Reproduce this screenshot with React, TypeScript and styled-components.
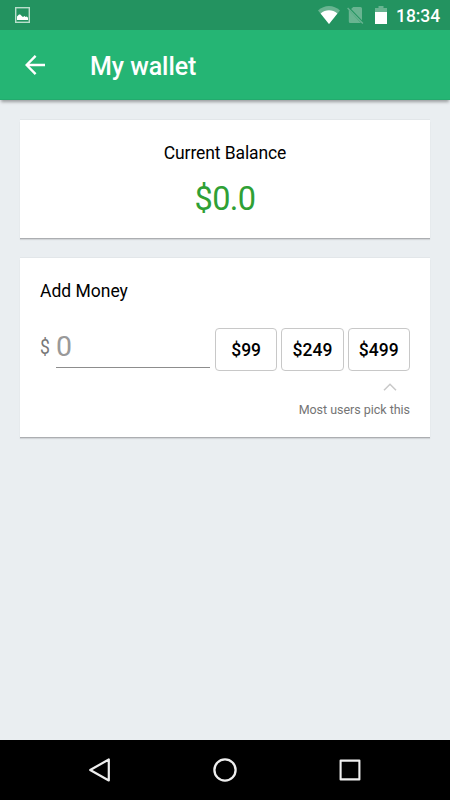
import React from "react";
import styled, { createGlobalStyle } from "styled-components";

const GlobalStyle = createGlobalStyle`
  * { box-sizing: border-box; }
  html, body { margin: 0; padding: 0; }
  body { font-family: Roboto, "Liberation Sans", sans-serif; background: #eaeef1; }
`;

const Screen = styled.div`
  width: 450px;
  height: 800px;
  display: flex;
  flex-direction: column;
  overflow: hidden;
  background: #eaeef1;
`;

const StatusBar = styled.header`
  height: 30px;
  flex: none;
  display: flex;
  align-items: center;
  padding: 0 10px 0 15px;
  background: #239360;
`;

const StatusIcons = styled.div`
  display: flex;
  align-items: center;
  margin-left: auto;
`;

const Clock = styled.time`
  width: 44px;
  margin-left: 9px;
  font-size: 17.5px;
  line-height: 30px;
  letter-spacing: -0.05px;
  padding-top: 2px;
  font-weight: 500;
  color: #fff;
  white-space: nowrap;
`;

const AppBar = styled.nav`
  height: 70px;
  flex: none;
  display: flex;
  align-items: center;
  padding-left: 25px;
  background: #25b574;
  border-bottom: 1px solid #22ab6d;
  box-shadow: 0 3px 3px -1px rgba(0, 0, 0, 0.34);
`;

const IconButton = styled.button`
  display: flex;
  padding: 0;
  border: 0;
  background: none;
`;

const Title = styled.h1`
  margin: 4px 0 0 45px;
  font-size: 25px;
  line-height: 30px;
  letter-spacing: -0.05px;
  font-weight: 500;
  color: #fff;
`;

const Content = styled.main`
  flex: 1;
  display: flex;
  flex-direction: column;
  gap: 20px;
  padding: 20px;
`;

const Card = styled.section<{ $height: number; $centered?: boolean }>`
  height: ${(p) => p.$height}px;
  display: flex;
  flex-direction: column;
  align-items: ${(p) => (p.$centered ? "center" : "stretch")};
  padding: 20px;
  background: #fff;
  box-shadow: 0 -1px 0 rgba(0, 0, 0, 0.03), 0 1px 0 rgba(0, 0, 0, 0.18), 0 2px 1px rgba(0, 0, 0, 0.1);
`;

const Label = styled.h2<{ $tight?: boolean }>`
  margin: 0;
  font-size: 17.5px;
  line-height: 26px;
  font-weight: 400;
  letter-spacing: ${(p) => (p.$tight ? "-0.1px" : "0")};
  color: #000;
`;

const Balance = styled.div`
  margin-top: 14px;
  font-size: 32.5px;
  line-height: 38px;
  letter-spacing: -0.6px;
  color: #2fa035;
`;

const AmountRow = styled.div`
  display: flex;
  margin-top: 23px;
  height: 44px;
`;

const Currency = styled.span`
  width: 16px;
  font-size: 20px;
  line-height: 40px;
  color: #777;
`;

const CurrencySign = styled.span`
  display: inline-block;
  transform: scaleX(0.88);
  transform-origin: left center;
`;

const AmountField = styled.div`
  width: 154px;
  height: 41px;
  border-bottom: 1px solid #8d8d8d;
  font-size: 28.5px;
  line-height: 40px;
  color: #999;
`;

const Presets = styled.div`
  display: flex;
  gap: 4px;
  margin: 1px 0 0 5px;
`;

const Preset = styled.button`
  width: 62.3px;
  height: 43px;
  padding: 1px 0 0;
  border: 1px solid #c8c8c8;
  border-radius: 4px;
  background: #fff;
  color: #000;
  font: 500 17.5px Roboto, "Liberation Sans", sans-serif;
`;

const Hint = styled.div`
  display: flex;
  flex-direction: column;
  align-items: flex-end;
  margin-top: 12px;
  font-size: 12.5px;
  line-height: 18px;
  letter-spacing: -0.03px;
  color: #747474;
`;

const Caret = styled.svg`
  margin: 0 13px 10px 0;
`;

const NavigationBar = styled.footer`
  height: 60px;
  flex: none;
  display: flex;
  align-items: center;
  justify-content: center;
  gap: 101px;
  background: #000;
`;

function PictureIcon() {
  return (
    <svg width="15" height="16" viewBox="0 0 15 16">
      <rect x=".7" y=".7" width="13.6" height="14.6" fill="none" stroke="#b9dfcc" strokeWidth="1.4" />
      <path d="M2 13V9.5L4 7.5h1.2L7 9.3l1 .7 1.6-1 1 1 1.2-.4L13 10.8V13Z" fill="#fff" />
    </svg>
  );
}

function WifiIcon() {
  return (
    <svg width="22" height="18" viewBox="0 0 22 18">
      <path d="M0 4.5C6.4-1.5 15.6-1.5 22 4.5L11 18Z" fill="#69b491" />
      <path d="M2.6 7.5c5-4.2 11.8-4.2 16.8 0L11 18Z" fill="#fff" />
    </svg>
  );
}

function NoSimIcon() {
  return (
    <svg width="17" height="18" viewBox="0 0 17 18">
      <path d="M6.2 1H13.5Q15 1 15 2.5V14.3L4.1 3.1ZM1.8 4 14 17H3.3Q1.8 17 1.8 15.5Z" fill="#69b491" />
      <path d="m.6 2.1 15.3 15.3" stroke="#69b491" strokeWidth="1.4" />
    </svg>
  );
}

function BatteryIcon() {
  return (
    <svg width="12" height="18" viewBox="0 0 12 18">
      <path d="M0 2h3.5V0h5v2H12v5H0Z" fill="#69b491" />
      <path d="M0 6h12v12H0Z" fill="#fff" />
    </svg>
  );
}

const StatusGap = styled.span<{ $size: number }>`
  width: ${(p) => p.$size}px;
`;

export default function App() {
  return (
    <>
      <GlobalStyle />
      <Screen>
        <StatusBar>
          <PictureIcon />
          <StatusIcons>
            <WifiIcon />
            <StatusGap $size={7} />
            <NoSimIcon />
            <StatusGap $size={11} />
            <BatteryIcon />
            <Clock>18:34</Clock>
          </StatusIcons>
        </StatusBar>
        <AppBar>
          <IconButton aria-label="Back">
            <svg width="20" height="20" viewBox="0 0 20 20" fill="none" stroke="#fff" strokeWidth="2.4">
              <path d="M20 10H2M10.6.9 1.6 10l9 9.1" />
            </svg>
          </IconButton>
          <Title>My wallet</Title>
        </AppBar>
        <Content>
          <Card $height={118} $centered>
            <Label $tight>Current Balance</Label>
            <Balance>$0.0</Balance>
          </Card>
          <Card $height={179}>
            <Label>Add Money</Label>
            <AmountRow>
              <Currency>
                <CurrencySign>$</CurrencySign>
              </Currency>
              <AmountField>0</AmountField>
              <Presets>
                <Preset>$99</Preset>
                <Preset>$249</Preset>
                <Preset>$499</Preset>
              </Presets>
            </AmountRow>
            <Hint>
              <Caret width="14" height="8" viewBox="0 0 14 8" fill="none" stroke="#c9c9c9" strokeWidth="1.5">
                <path d="m1 7.3 6-6 6 6" />
              </Caret>
              <span>Most users pick this</span>
            </Hint>
          </Card>
        </Content>
        <NavigationBar>
          <IconButton aria-label="Back">
            <svg width="24" height="24" viewBox="0 0 24 24" fill="none" stroke="#eee" strokeWidth="2.2" strokeLinejoin="round">
              <path d="M20.8 1.5v21L2.2 12Z" />
            </svg>
          </IconButton>
          <IconButton aria-label="Home">
            <svg width="24" height="24" viewBox="0 0 24 24" fill="none" stroke="#eee" strokeWidth="2.3">
              <circle cx="12" cy="12" r="10.6" />
            </svg>
          </IconButton>
          <IconButton aria-label="Recent apps">
            <svg width="24" height="24" viewBox="0 0 24 24" fill="none" stroke="#eee" strokeWidth="2.1" strokeLinejoin="round">
              <rect x="2.6" y="2.6" width="18.8" height="18.8" />
            </svg>
          </IconButton>
        </NavigationBar>
      </Screen>
    </>
  );
}
